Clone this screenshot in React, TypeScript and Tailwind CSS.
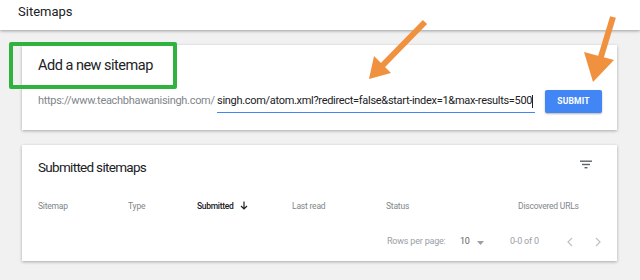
import React from "react";

export default function App() {
  return (
    <div
      className="relative w-[640px] h-[280px] overflow-hidden bg-[#f1f1f1]"
      style={{ fontFamily: "Roboto, 'Liberation Sans', sans-serif" }}
    >
      {/* Header */}
      <div className="h-[30px] bg-white shadow-[0_1px_3px_rgba(0,0,0,0.35)] flex items-center px-[18px] relative z-10">
        <span className="text-[13px] text-[#202124] -mt-[6px]">Sitemaps</span>
      </div>

      <div className="px-[22px] pt-[15px]">
        {/* Card 1 */}
        <div className="w-[595px] h-[85px] bg-white shadow-[0_1px_3px_rgba(0,0,0,0.3)] pl-[16px] pr-[15px] pt-[11px]">
          <div className="text-[14.5px] leading-[20px] text-[#202124] tracking-[-0.5px]">Add a new sitemap</div>
          <div className="flex items-center mt-[14px]">
            <span className="w-[179px] whitespace-nowrap text-[11px] text-[#80868b] tracking-[-0.3px]">
              https://www.teachbhawanisingh.com/
            </span>
            <div className="w-[318px] h-[22px] border-b border-[#4285f4] flex items-center">
              <span className="text-[11px] text-[#202124] tracking-[-0.3px] whitespace-nowrap">
                singh.com/atom.xml?redirect=false&amp;start-index=1&amp;max-results=500
              </span>
              <span className="w-px h-[13px] bg-[#202124]" />
            </div>
            <button className="ml-[10px] w-[57px] h-[23px] bg-[#4285f4] rounded-[2px] text-white text-[8.5px] font-bold tracking-[0.2px] shadow-[0_1px_2px_rgba(0,0,0,0.3)]">
              SUBMIT
            </button>
          </div>
        </div>

        {/* Card 2 */}
        <div className="mt-[15px] w-[595px] h-[116px] bg-white shadow-[0_1px_3px_rgba(0,0,0,0.3)] pl-[16px] pr-[15px] pt-[12px]">
          <div className="flex items-center justify-between">
            <span className="text-[13.5px] leading-[20px] text-[#202124] tracking-[-0.7px]">Submitted sitemaps</span>
            <svg width="12" height="9" viewBox="0 0 12 9" className="mr-[10px] -mt-[5px]">
              <rect x="0" y="0.5" width="12" height="1.4" fill="#5f6368" />
              <rect x="2" y="3.8" width="8" height="1.4" fill="#5f6368" />
              <rect x="4.5" y="7" width="3" height="1.4" fill="#5f6368" />
            </svg>
          </div>
          <div className="flex items-center mt-[22px] text-[8.5px] text-[#80868b] tracking-[-0.2px] h-[14px]">
            <span className="w-[90px]">Sitemap</span>
            <span className="w-[69px]">Type</span>
            <span className="w-[95px] text-[#202124] font-medium tracking-[-0.3px] flex items-center">
              Submitted
              <svg width="8" height="9" viewBox="0 0 8 9" className="ml-[6px] -mt-[2px]">
                <path d="M4 0.5 V8 M1 5 L4 8 L7 5" stroke="#202124" strokeWidth="1.2" fill="none" />
              </svg>
            </span>
            <span className="w-[94px]">Last read</span>
            <span className="w-[132px]">Status</span>
            <span>Discovered URLs</span>
          </div>
          <div className="flex items-center mt-[22px] text-[9px] tracking-[-0.2px] text-[#9aa0a6] h-[14px]">
            <span className="ml-[349px] w-[73px]">Rows per page:</span>
            <span className="text-[#5f6368] w-[17px]">10</span>
            <svg width="7" height="5" viewBox="0 0 7 5" className="mt-[3px]">
              <path d="M0 0 H7 L3.5 4 Z" fill="#9aa0a6" />
            </svg>
            <span className="ml-[26px] w-[57px]">0-0 of 0</span>
            <svg width="6" height="10" viewBox="0 0 6 10">
              <path d="M5 1 L1 5 L5 9" stroke="#bdc1c6" strokeWidth="1.2" fill="none" />
            </svg>
            <svg width="6" height="10" viewBox="0 0 6 10" className="ml-[22px]">
              <path d="M1 1 L5 5 L1 9" stroke="#bdc1c6" strokeWidth="1.2" fill="none" />
            </svg>
          </div>
        </div>
      </div>

      {/* Green highlight box */}
      <div className="absolute left-[9px] top-[42px] w-[168px] h-[47px] border-[4px] border-[#2fb23e] rounded-[2px] z-20" />

      {/* Orange arrows */}
      <svg className="absolute left-0 top-0 z-30" width="640" height="280" viewBox="0 0 640 280">
        <line x1="425" y1="22" x2="382" y2="66" stroke="#f0913f" strokeWidth="6" strokeLinecap="butt" />
        <polygon points="369,79 374,56 391,73" fill="#f0913f" />
        <line x1="613" y1="17" x2="600" y2="60" stroke="#f0913f" strokeWidth="6" />
        <polygon points="593,82 584,52 614,60" fill="#f0913f" />
      </svg>
    </div>
  );
}
